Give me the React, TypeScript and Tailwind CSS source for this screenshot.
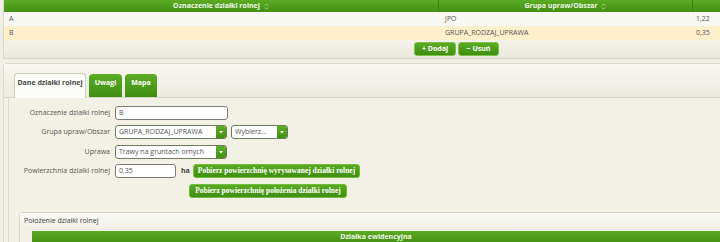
import React from "react";

function SortIcon() {
  return (
    <svg width="5" height="7" viewBox="0 0 5 7" className="inline-block ml-[4px] opacity-80">
      <path d="M0.8 2.6 L2.5 0.9 L4.2 2.6 M0.8 4.4 L2.5 6.1 L4.2 4.4" fill="none" stroke="#e8f5dc" strokeWidth="0.8" />
    </svg>
  );
}

function Select({ value, width }: { value: string; width: string }) {
  return (
    <div className={`flex h-[14px] ${width} rounded-[3px] border border-[#6d7a5e] bg-white overflow-hidden`}>
      <span className="flex-1 pl-[3px] leading-[12px] text-[#555] truncate">{value}</span>
      <span className="flex w-[10px] items-center justify-center bg-gradient-to-b from-[#5fae27] to-[#438f13]">
        <svg width="4" height="3" viewBox="0 0 4 3">
          <path d="M0 0 H4 L2 2.5 Z" fill="#fff" />
        </svg>
      </span>
    </div>
  );
}

function Field({ label, children }: { label: string; children: React.ReactNode }) {
  return (
    <div className="flex items-center">
      <div className="w-[106px] pr-[5px] text-right text-[#555]">{label}</div>
      <div className="flex items-center gap-[4px]">{children}</div>
    </div>
  );
}

function GreenButton({ children, className = "" }: { children: React.ReactNode; className?: string }) {
  return (
    <button
      className={`h-[14px] whitespace-nowrap rounded-[3px] border border-[#6fbd3a] bg-gradient-to-b from-[#5aab22] to-[#3f8e12] px-[4px] font-['Liberation_Serif',serif] text-[7.5px] font-bold leading-[12px] text-white ${className}`}
    >
      {children}
    </button>
  );
}

export default function App() {
  return (
    <div className="h-[242px] w-[720px] overflow-hidden bg-[#f1efe4] font-['Open_Sans',sans-serif] text-[7px] text-[#555]">
      {/* lista działek */}
      <div className="ml-[3px] border-b border-l border-[#d9d7cc] bg-[#f2f1ea]">
        <div className="flex h-[12px] bg-gradient-to-b from-[#5cab24] to-[#438f12] font-bold leading-[12px] text-[#eef7e6]">
          <div className="w-[435px] border-r border-[#3a7e0e] text-center">
            Oznaczenie działki rolnej
            <SortIcon />
          </div>
          <div className="w-[254px] border-r border-[#3a7e0e] text-center">
            Grupa upraw/Obszar
            <SortIcon />
          </div>
          <div className="flex-1" />
        </div>
        <div className="flex h-[14px] items-center bg-[#f8f8f2]">
          <div className="w-[435px] pl-[5px]">A</div>
          <div className="w-[254px] pl-[6px]">JPO</div>
          <div className="flex-1 pl-[3px]">1,22</div>
        </div>
        <div className="flex h-[14px] items-center bg-[#fdf0ca]">
          <div className="w-[435px] pl-[5px]">B</div>
          <div className="w-[254px] pl-[6px]">GRUPA_RODZAJ_UPRAWA</div>
          <div className="flex-1 pl-[3px]">0,35</div>
        </div>
        <div className="flex h-[18px] items-center gap-[2px] bg-gradient-to-b from-[#f3f2ea] to-[#ebe9de] pl-[410px]">
          <button className="h-[14px] w-[42px] rounded-[3px] border border-[#7cc24a] bg-gradient-to-b from-[#5aab22] to-[#3f8e12] text-[7px] font-bold leading-[12px] text-white">
            + Dodaj
          </button>
          <button className="h-[14px] w-[41px] rounded-[3px] border border-[#7cc24a] bg-gradient-to-b from-[#5aab22] to-[#3f8e12] text-[7px] font-bold leading-[12px] text-white">
            − Usuń
          </button>
        </div>
      </div>

      {/* szczegóły działki */}
      <div className="ml-[3px] mt-[4px] rounded-tl-[4px] border-l border-t border-[#dedcd0] bg-[#f3f1e6]">
        <div className="flex h-[34px] items-end gap-[3px] border-b border-[#d8d6ca] bg-gradient-to-b from-[#f7f6f0] to-[#ecebe2] pl-[10px]">
          <div className="-mb-px h-[25px] w-[72px] rounded-t-[4px] border border-b-0 border-[#cfcdc2] bg-[#fbfbf7] pt-[4px] text-center font-bold text-[#4a4a4a]">
            Dane działki rolnej
          </div>
          <div className="h-[23px] w-[33px] rounded-t-[4px] bg-gradient-to-b from-[#5cab24] to-[#3f8e12] pt-[4px] text-center font-bold text-white">
            Uwagi
          </div>
          <div className="h-[23px] w-[32px] rounded-t-[4px] bg-gradient-to-b from-[#5cab24] to-[#3f8e12] pt-[4px] text-center font-bold text-white">
            Mapa
          </div>
        </div>

        <div className="ml-[4px] border-l border-[#dedcd0] pb-[14px]">
          <div className="flex flex-col gap-[6px] pt-[8px]">
            <Field label="Oznaczenie działki rolnej">
              <div className="h-[14px] w-[113px] rounded-[3px] border border-[#7c7c72] bg-white pl-[3px] leading-[12px]">B</div>
            </Field>
            <div className="-mt-px">
              <Field label="Grupa upraw/Obszar">
                <Select value="GRUPA_RODZAJ_UPRAWA" width="w-[112px]" />
                <Select value="Wybierz..." width="w-[57px]" />
              </Field>
            </div>
            <Field label="Uprawa">
              <Select value="Trawy na gruntach ornych" width="w-[112px]" />
            </Field>
            <div className="-mt-px">
              <Field label="Powierzchnia działki rolnej">
                <div className="h-[14px] w-[61px] rounded-[3px] border border-[#7c7c72] bg-white pl-[3px] leading-[12px]">0,35</div>
                <span className="pl-[1px] font-bold text-[#444]">ha</span>
                <GreenButton className="-ml-[1px] w-[167px]">Pobierz powierzchnię wyrysowanej działki rolnej</GreenButton>
              </Field>
            </div>
            <div className="pl-[180px]">
              <GreenButton className="w-[158px]">Pobierz powierzchnię położenia działki rolnej</GreenButton>
            </div>
          </div>

          <div className="ml-[10px] mt-[14px] rounded-tl-[4px] border-l border-t border-[#d6d4c8]">
            <div className="flex h-[17px] items-center bg-gradient-to-b from-[#fbfbf7] to-[#efeee6] pl-[4px] text-[#444]">
              Położenie działki rolnej
            </div>
            <div className="ml-[12px] mt-[1px] flex h-[12px] items-center justify-center bg-gradient-to-b from-[#5cab24] to-[#438f12] font-bold text-[#eef7e6]">
              Działka ewidencyjna
            </div>
          </div>
        </div>
      </div>
    </div>
  );
}
